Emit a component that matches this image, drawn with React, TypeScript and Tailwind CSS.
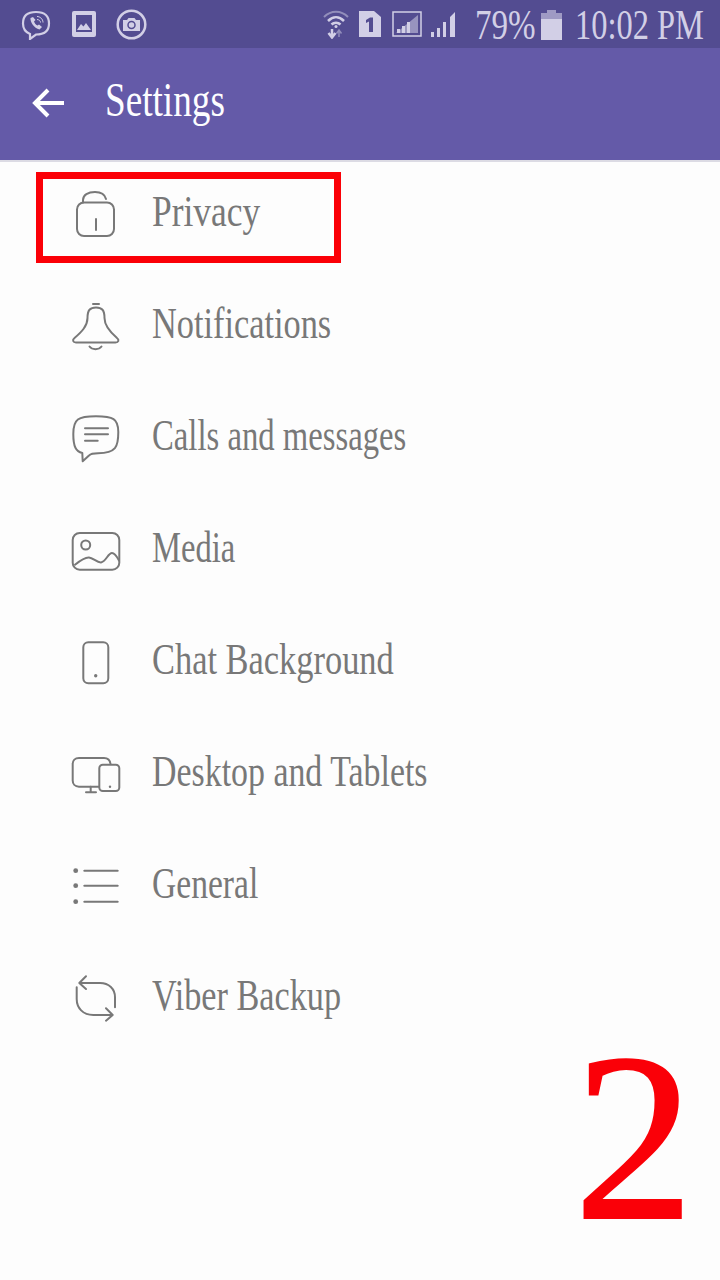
import React from "react";

const Svg = ({ children }: { children: React.ReactNode }) => (
  <svg viewBox="0 0 60 60" className="w-[60px] h-[60px] shrink-0" fill="none" stroke="#787878" strokeWidth="2" strokeLinecap="round" strokeLinejoin="round">
    {children}
  </svg>
);

const icons = {
  lock: (
    <Svg>
      <path d="M17 20.500V18C17 13 22 10 29 10C35 10 39 13 40 17" />
      <rect x="11" y="20.500" width="37" height="33.500" rx="7" />
      <path d="M30 37V48" />
    </Svg>
  ),
  bell: (
    <Svg>
      <path d="M27 10H33" strokeWidth="2" />
      <path d="M21.500 24C21.500 16 24 13.500 30 13.500C36 13.500 38.500 16 38.500 24C38.500 32 44 38 51 44C53.500 46 52.500 48.500 49.500 48.500H10C7 48.500 6 46 8.500 44C15.500 38 21.500 32 21.500 24Z" />
      <path d="M23.500 52.500C26 56 33 56 35.500 52.500" />
    </Svg>
  ),
  chat: (
    <Svg>
      <path d="M30 10.300C47 10.300 52.300 12.500 52.300 26C52.300 41 50 47 32 47.300C27 47.300 25 47.500 23 49.500L16.700 55.300L16.300 47C10 45.500 7.300 41 7.300 28C7.300 13 12 10.300 30 10.300Z" />
      <path d="M19 22.300H42M19 28.300H42M19 34.700H31.700" />
    </Svg>
  ),
  media: (
    <Svg>
      <rect x="6.700" y="15" width="46.600" height="36.700" rx="7" />
      <circle cx="19.700" cy="27" r="4.500" />
      <path d="M9 46.700C15 41.700 19 39.200 23 39.400C27 39.700 31 44.700 35 44.400C40 43.700 42 35 46 35C49 35 51 38.700 53 42.400" />
    </Svg>
  ),
  phone: (
    <Svg>
      <rect x="17.300" y="12.300" width="25" height="41" rx="5" />
      <circle cx="29.700" cy="45.700" r="1.700" fill="#787878" stroke="none" />
    </Svg>
  ),
  desktop: (
    <Svg>
      <path d="M33 44.700H13C9 44.700 6.700 42 6.700 38.500V22C6.700 18.500 9 16 13 16H38C41.500 16 44 18 44.500 22" />
      <path d="M24.700 44.700V50.300M20 50.300H30" />
      <rect x="33.300" y="22.700" width="20" height="26.300" rx="3.500" />
      <circle cx="44" cy="44.700" r="1.200" fill="#787878" stroke="none" />
    </Svg>
  ),
  list: (
    <Svg>
      <circle cx="9.700" cy="16.700" r="2.400" fill="#787878" stroke="none" />
      <circle cx="9.700" cy="31.700" r="2.400" fill="#787878" stroke="none" />
      <circle cx="9.700" cy="47.700" r="2.400" fill="#787878" stroke="none" />
      <path d="M18.300 16.700H51.700M18.300 31.700H51.700M18.300 47.700H51.700" />
    </Svg>
  ),
  sync: (
    <Svg>
      <path d="M20 10.300L13.300 17L20 23M13.300 17H34C43 17 49 23 49 31.300V41.300" />
      <path d="M40 42.300L46.700 49L40 54.700M46.700 49H27.300C17 49 10.700 42 10.700 33V21.300" />
    </Svg>
  ),
};

const rows: { icon: keyof typeof icons; label: string; cls: string }[] = [
  { icon: "lock", label: "Privacy", cls: "scale-x-[0.805]" },
  { icon: "bell", label: "Notifications", cls: "scale-x-[0.78]" },
  { icon: "chat", label: "Calls and messages", cls: "scale-x-[0.743]" },
  { icon: "media", label: "Media", cls: "scale-x-[0.74]" },
  { icon: "phone", label: "Chat Background", cls: "scale-x-[0.782]" },
  { icon: "desktop", label: "Desktop and Tablets", cls: "scale-x-[0.77]" },
  { icon: "list", label: "General", cls: "scale-x-[0.763]" },
  { icon: "sync", label: "Viber Backup", cls: "scale-x-[0.778]" },
];

const C = "#d2cfe6";

export default function App() {
  return (
    <div className="relative w-[720px] h-[1280px] overflow-hidden bg-[#fdfdfd] font-['Liberation_Serif',serif]">
      <div className="h-12 bg-[#534c91] flex items-center text-[#d2cfe6]">
        <svg viewBox="0 0 30 30" className="w-[30px] h-[30px] ml-[21px] mt-[2px] shrink-0" fill="none" stroke={C} strokeWidth="2.200">
          <path d="M15 2C24 2 28 6 28 13.500C28 21 24 24.500 15 24.500L9 29V24C4 22 2 19 2 13.500C2 6 6 2 15 2Z" />
          <path d="M9.500 8C9 12 13 18 18.500 19.500L21 17L18 14.500L16.500 15.500C14.500 14.500 13.500 13 13 11.500L14.500 10L12 7Z" fill={C} stroke="none" />
          <path d="M16 6.500C19 6.500 22 9 22 12.500M16 9.500C18 9.500 19.500 11 19.500 12.500" strokeWidth="1" />
        </svg>
        <svg viewBox="0 0 24 26" className="w-6 h-[26px] ml-[21px] shrink-0">
          <rect width="24" height="26" rx="2" fill={C} />
          <rect x="4" y="4" width="16" height="17" fill="#534c91" />
          <path d="M5 19L9 13L11.500 15.500L14 12L19 19Z" fill={C} />
        </svg>
        <svg viewBox="0 0 31 31" className="w-[31px] h-[31px] ml-[20px] shrink-0" fill="none">
          <circle cx="15.500" cy="15.500" r="13.800" stroke={C} strokeWidth="2.500" />
          <path d="M7 11H11L12.500 9H18.500L20 11H24V22H7Z" fill={C} />
          <circle cx="15.500" cy="16" r="3.500" stroke="#534c91" strokeWidth="1.500" />
        </svg>
        <svg viewBox="0 0 26 30" className="w-[26px] h-[30px] ml-[176px] shrink-0" fill="none" stroke={C}>
          <path d="M1 8C8 1 18 1 25 8" strokeWidth="2" opacity="0.5" />
          <path d="M5 12C10 7 16 7 21 12M8.500 15.500C11 13 15 13 17.500 15.500" strokeWidth="2.500" />
          <circle cx="13" cy="17.500" r="1.500" fill={C} stroke="none" />
          <path d="M9 20V27M5.500 24L9 28.500L12.500 24" strokeWidth="2.500" />
          <path d="M16 28V22M13.500 24.500L16 21L18.500 24.500" strokeWidth="1.500" opacity="0.5" />
        </svg>
        <svg viewBox="0 0 22 26" className="w-[22px] h-[26px] ml-[10px] shrink-0">
          <path d="M0 0H15L22 6V26H0Z" fill={C} />
          <path d="M7 9L11 6.500H14V21H10V10.500L7 12Z" fill="#534c91" />
        </svg>
        <svg viewBox="0 0 30 26" className="w-[30px] h-[26px] ml-[11px] shrink-0">
          <rect x="1" y="1" width="28" height="24" fill="none" stroke={C} strokeWidth="1.500" />
          <path d="M26 4V22H4Z" fill={C} opacity="0.55" />
          <path d="M5 22H8V18H5ZM10 22H13V15H10ZM15 22H18V11H15Z" fill={C} />
        </svg>
        <svg viewBox="0 0 26 26" className="w-[26px] h-[26px] ml-[8px] shrink-0">
          <path d="M1 26H4V21H1ZM7 26H10V17H7ZM13 26H16V11H13ZM20 26H25V1L20 6Z" fill={C} />
        </svg>
        <span className="ml-[19px] w-[59px] shrink-0 text-[43px] leading-none whitespace-nowrap origin-left scale-x-[0.77]">79%</span>
        <svg viewBox="0 0 21 30" className="w-[21px] h-[30px] ml-[7px] mt-[2px] shrink-0">
          <path d="M6 0H15V3H6Z" fill={C} opacity="0.6" />
          <path d="M0 3H21V9H0Z" fill={C} opacity="0.6" />
          <path d="M0 9H21V30H0Z" fill={C} />
        </svg>
        <span className="ml-[13px] w-[129px] shrink-0 text-[43px] leading-none whitespace-nowrap origin-left scale-x-[0.755]">10:02 PM</span>
      </div>

      <header className="h-[114px] bg-[#645aa8] flex items-center pb-[2px] border-b-2 border-[#dcdbe4]">
        <svg viewBox="0 0 34 32" className="w-[34px] h-8 ml-[32px] shrink-0" fill="none" stroke="white" strokeWidth="4">
          <path d="M32 16H4M16 3L3 16L16 29" />
        </svg>
        <h1 className="ml-[39px] mb-[6px] text-[48px] leading-none font-normal text-[#fdfdff] whitespace-nowrap origin-left scale-x-[0.775]">Settings</h1>
      </header>

      <ul>
        {rows.map((r) => (
          <li key={r.label} className="h-[112px] pb-[12px] flex items-center pl-[66px]">
            {icons[r.icon]}
            <span className={`ml-[26px] text-[44px] leading-none text-[#787878] whitespace-nowrap origin-left ${r.cls}`}>{r.label}</span>
          </li>
        ))}
      </ul>

      <div className="absolute left-[36px] top-[172px] w-[305px] h-[91px] border-[7px] border-[#fb0007]" />
      <div className="absolute left-[574px] top-[1017px] text-[240px] leading-none text-[#fa0008] [-webkit-text-stroke:2px_#fa0008]">2</div>
    </div>
  );
}
